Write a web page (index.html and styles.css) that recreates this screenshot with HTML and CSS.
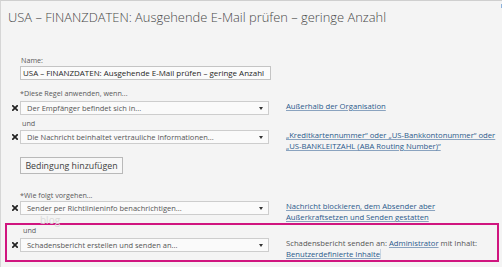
FILE: index.html
```html
<!DOCTYPE html>
<html lang="de">
<head>
<meta charset="utf-8">
<link rel="stylesheet" href="styles.css">
</head>
<body>
<div class="frame">
  <span class="scroll-dot"></span>
  <h1 class="title">USA – FINANZDATEN: Ausgehende E-Mail prüfen – geringe Anzahl</h1>
  <div class="form">
    <div class="lbl name-lbl">Name:</div>
    <div class="input">USA – FINANZDATEN: Ausgehende E-Mail prüfen – geringe Anzahl</div>

    <div class="lbl sec-lbl">*Diese Regel anwenden, wenn...</div>
    <div class="row r1">
      <span class="x"><svg width="6" height="6" viewBox="0 0 6 6"><path d="M0.8 0.8L5.2 5.2M5.2 0.8L0.8 5.2"/></svg></span>
      <div class="select"><span>Der Empfänger befindet sich in...</span><span class="arrow"></span></div>
      <div class="val"><a href="#">Außerhalb der Organisation</a></div>
    </div>
    <div class="lbl und">und</div>
    <div class="row">
      <span class="x"><svg width="6" height="6" viewBox="0 0 6 6"><path d="M0.8 0.8L5.2 5.2M5.2 0.8L0.8 5.2"/></svg></span>
      <div class="select"><span>Die Nachricht beinhaltet vertrauliche Informationen...</span><span class="arrow"></span></div>
      <div class="val"><a href="#">„Kreditkartennummer“ oder „US-Bankkontonummer“ oder „US-BANKLEITZAHL (ABA Routing Number)“</a></div>
    </div>
    <button class="btn">Bedingung hinzufügen</button>

    <div class="lbl sec-lbl2">*Wie folgt vorgehen...</div>
    <div class="row">
      <span class="x"><svg width="6" height="6" viewBox="0 0 6 6"><path d="M0.8 0.8L5.2 5.2M5.2 0.8L0.8 5.2"/></svg></span>
      <div class="select"><span>Sender per Richtlinieninfo benachrichtigen...</span><span class="arrow"></span></div>
      <div class="val"><a href="#">Nachricht blockieren, dem Absender aber Außerkraftsetzen und Senden gestatten</a></div>
    </div>

    <div class="highlight">
      <span class="watermark">blog</span>
      <div class="lbl und2">und</div>
      <div class="row">
        <span class="x"><svg width="6" height="6" viewBox="0 0 6 6"><path d="M0.8 0.8L5.2 5.2M5.2 0.8L0.8 5.2"/></svg></span>
        <div class="select"><span>Schadensbericht erstellen und senden an...</span><span class="arrow"></span></div>
        <div class="val plain">Schadensbericht senden an: <a href="#">Administrator</a> mit Inhalt: <a href="#" class="focus">Benutzerdefinierte Inhalte</a></div>
      </div>
    </div>
  </div>
</div>
</body>
</html>
```

FILE: styles.css
```css
* { box-sizing: border-box; }
html, body { margin: 0; padding: 0; }
body {
  width: 502px;
  height: 267px;
  overflow: hidden;
  background: #f4f4f4;
  font-family: "Open Sans", "Noto Sans", "Liberation Sans", sans-serif;
  color: #444;
}
.frame {
  position: relative;
  height: 267px;
  border-top: 1px solid #cfcfcf;
  border-left: 1px solid #d6d6d6;
  background: #f4f4f4;
}
.scroll-dot {
  position: absolute;
  right: 0;
  top: 3px;
  width: 1px;
  height: 4px;
  background: #8fb3dc;
}
.title {
  margin: 0;
  padding: 8px 0 0 7px;
  height: 26px;
  font-size: 12.9px;
  line-height: 16px;
  font-weight: 300;
  color: #484848;
  white-space: nowrap;
}
.form {
  padding-left: 7px;
}
.lbl {
  font-size: 7.2px;
  line-height: 10px;
  color: #5a5a5a;
  padding-left: 12px;
  white-space: nowrap;
}
.name-lbl { margin-top: 28px; padding-left: 13px; }
.input {
  margin: 1px 0 0 12px;
  width: 251px;
  height: 14px;
  border: 1px solid #c4c4c4;
  background: #fbfbfb;
  font-size: 7.95px;
  line-height: 12px;
  padding-left: 2px;
  color: #262626;
  white-space: nowrap;
  overflow: hidden;
}
.sec-lbl { margin-top: 8px; }
.und { margin-top: 3px; padding-left: 14px; }
.row {
  display: grid;
  grid-template-columns: 12px 249px 1fr;
  align-items: start;
}
.r1 { margin-top: 3px; }
.und + .row { margin-top: 2px; }
.x {
  display: flex;
  justify-content: center;
  align-items: center;
  height: 14px;
  padding-left: 1px;
}
.x svg path {
  stroke: #222;
  stroke-width: 1.7;
  stroke-linecap: square;
  fill: none;
}
.select {
  height: 14px;
  border: 1px solid #cdcdcd;
  background: #fafafa;
  display: flex;
  align-items: center;
  justify-content: space-between;
  padding: 0 5px 0 6px;
  font-size: 7.5px;
  color: #555;
  white-space: nowrap;
  overflow: hidden;
}
.arrow {
  width: 0;
  height: 0;
  border-left: 2.5px solid transparent;
  border-right: 2.5px solid transparent;
  border-top: 3px solid #333;
  margin-top: 1px;
}
.val {
  padding-left: 17px;
  font-size: 7.7px;
  line-height: 11px;
  color: #555;
  padding-right: 3px;
}
.val a {
  color: #2b5a8c;
  text-decoration: underline;
  text-decoration-color: #8aa3bf;
  text-underline-offset: 1px;
}
.val.plain a.focus {
  box-shadow: 1px 0 0 #c8d4e2;
}
.btn {
  display: block;
  margin: 5px 0 0 12px;
  width: 103px;
  height: 17px;
  border: 1px solid #b9b9b9;
  background: #f7f7f7;
  font-family: "Open Sans", "Noto Sans", "Liberation Sans", sans-serif;
  font-size: 8.8px;
  color: #404040;
  padding: 0;
}
.sec-lbl2 { margin-top: 16px; }
.sec-lbl2 + .row { margin-top: 1px; }
.highlight {
  position: relative;
  margin: 0 0 0 -3px;
  width: 494px;
  height: 39px;
  border: 2px solid #d0157f;
  padding-left: 1px;
}
.und2 { line-height: 10px; padding-left: 15px; }
.und2 + .row { margin-top: 3px; }
.watermark {
  position: absolute;
  left: 33px;
  top: -10px;
  font-size: 10px;
  line-height: 10px;
  color: #dadada;
}
```
